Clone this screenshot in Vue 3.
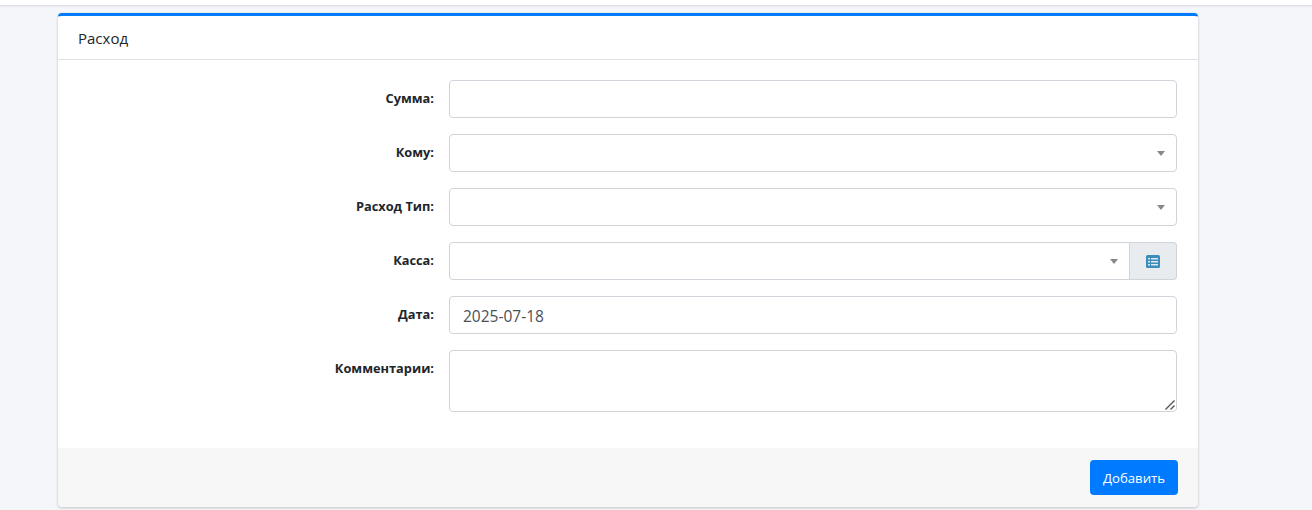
<script setup>
const rows = [
  { label: 'Сумма:', type: 'input' },
  { label: 'Кому:', type: 'select' },
  { label: 'Расход Тип:', type: 'select' },
  { label: 'Касса:', type: 'group' },
  { label: 'Дата:', type: 'input', value: '2025-07-18' },
  { label: 'Комментарии:', type: 'textarea' },
]
</script>

<template>
  <div class="page">
    <div class="topbar"></div>
    <section class="card">
      <header class="card-header">Расход</header>
      <div class="card-body">
        <div v-for="row in rows" :key="row.label" class="row">
          <label class="label">{{ row.label }}</label>
          <div class="field">
            <input v-if="row.type === 'input'" class="control" type="text" :value="row.value || ''" />
            <template v-else-if="row.type === 'textarea'">
              <textarea class="control area"></textarea>
              <svg class="grip" width="10" height="10" viewBox="0 0 10 10">
                <path d="M0.5 9.5 L9.5 0.5 M5.5 9.5 L9.5 5.5" stroke="#555" stroke-width="1.4" fill="none" />
              </svg>
            </template>
            <div v-else class="group">
              <div class="control select" :class="{ joined: row.type === 'group' }">
                <span class="caret"></span>
              </div>
              <span v-if="row.type === 'group'" class="addon">
                <svg width="14" height="13" viewBox="0 0 14 13">
                  <rect x="0" y="0" width="14" height="13" rx="1.5" fill="#3c8dbc" />
                  <g fill="#dfe8ee">
                    <rect x="2" y="3" width="2" height="1.5" />
                    <rect x="2" y="6" width="2" height="1.5" />
                    <rect x="2" y="9" width="2" height="1.5" />
                    <rect x="5" y="3" width="7" height="1.5" />
                    <rect x="5" y="6" width="7" height="1.5" />
                    <rect x="5" y="9" width="7" height="1.5" />
                  </g>
                </svg>
              </span>
            </div>
          </div>
        </div>
      </div>
      <footer class="card-footer">
        <button class="btn" type="button">Добавить</button>
      </footer>
    </section>
  </div>
</template>

<style>
html, body { margin: 0; background: #f4f6f9; }
</style>

<style scoped>
.page {
  height: 510px;
  overflow: hidden;
  background: #f4f6f9;
  font-family: "Open Sans", "Noto Sans", sans-serif;
  color: #212529;
  font-size: 14px;
  box-sizing: border-box;
}
.topbar {
  height: 5px;
  background: #fff;
  border-bottom: 1px solid #dee2e6;
  box-shadow: 0 1px 2px rgba(0,0,0,.05);
}
.card {
  width: 1140px;
  height: 494px;
  margin: 7px 0 0 58px;
  box-sizing: border-box;
  background: #fff;
  border-top: 3px solid #007bff;
  border-radius: 4px;
  box-shadow: 0 0 1px rgba(0,0,0,.125), 0 1px 3px rgba(0,0,0,.2);
  display: flex;
  flex-direction: column;
  overflow: hidden;
}
.card-header {
  height: 44px;
  box-sizing: border-box;
  padding: 0 20px;
  display: flex;
  align-items: center;
  font-size: 15px;
  border-bottom: 1px solid #dfe2e6;
}
.card-body {
  flex: 1;
  padding: 20px 21px 0 20px;
  display: flex;
  flex-direction: column;
  gap: 16px;
}
.row {
  display: grid;
  grid-template-columns: 356px 1fr;
  column-gap: 15px;
}
.label {
  font-weight: 700;
  font-size: 12.8px;
  text-align: right;
  line-height: 20px;
  padding-top: 8px;
}
.field { position: relative; }
.control {
  display: block;
  width: 100%;
  height: 38px;
  box-sizing: border-box;
  border: 1px solid #ced4da;
  border-radius: 4px;
  padding: 7px 12px 6px 13px;
  font-family: inherit;
  font-size: 15.5px;
  color: #495057;
  background: #fff;
  outline: none;
  margin: 0;
}
.area { height: 62px; resize: none; }
.grip {
  position: absolute;
  right: 2px;
  bottom: 2px;
}
.group { display: flex; }
.select {
  flex: 1;
  position: relative;
}
.joined {
  border-radius: 4px 0 0 4px;
}
.caret {
  position: absolute;
  right: 11px;
  top: 16px;
  width: 0;
  height: 0;
  border-left: 4px solid transparent;
  border-right: 4px solid transparent;
  border-top: 5px solid #888;
}
.addon {
  width: 47px;
  height: 38px;
  box-sizing: border-box;
  border: 1px solid #ced4da;
  border-left: 0;
  border-radius: 0 4px 4px 0;
  background: #e9ecef;
  display: flex;
  align-items: center;
  justify-content: center;
}
.card-footer {
  height: 59px;
  box-sizing: border-box;
  background: #f7f7f7;
  padding: 12px 20px;
  display: flex;
  justify-content: flex-end;
}
.btn {
  width: 88px;
  height: 35px;
  border: 0;
  border-radius: 4px;
  background: #007bff;
  color: #fff;
  font-family: inherit;
  font-size: 13.2px;
  padding: 0;
}
</style>
